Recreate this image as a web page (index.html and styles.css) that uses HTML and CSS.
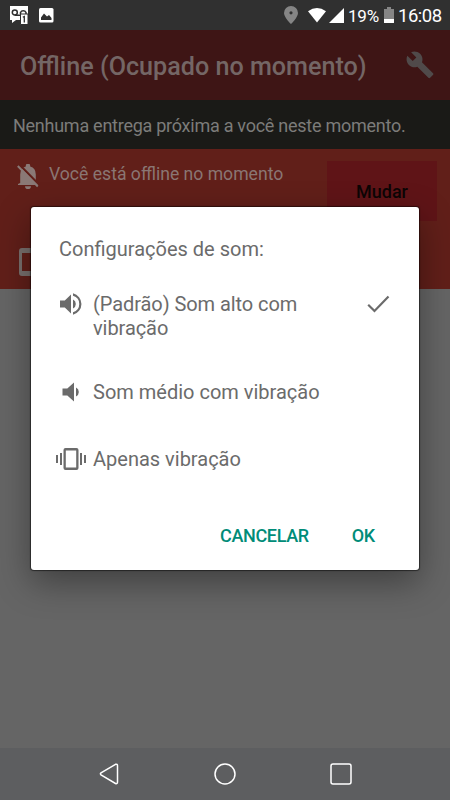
FILE: index.html
```html
<!DOCTYPE html>
<html lang="pt-BR">
<head>
<meta charset="utf-8">
<title>Configurações de som</title>
<link rel="stylesheet" href="styles.css">
</head>
<body>
<div class="phone">
  <header class="status">
    <svg class="status-contact" width="19" height="19" viewBox="0 0 19 19"><path fill="#fff" d="M0 0h18v18h-8v-4H6l-4 3v-3H0z"/><g fill="none" stroke="#303030" stroke-width="1.5"><circle cx="4.8" cy="6.5" r="2.5"/><path d="M4.8 9.3h7M10.5 8V6.5a3 3 0 0 1 5.500 0V8"/></g><path fill="#fff" stroke="#303030" d="M10.500 8h7.500v10.500h-7.500z"/><path stroke="#303030" stroke-width="1.3" fill="none" d="M12.800 11.300l1.500-.8v6"/></svg>
    <svg class="status-image" width="15" height="15" viewBox="0 0 15 15"><rect width="14.500" height="14.500" rx="1.500" fill="#fff"/><path fill="#303030" d="M2 12V9.500l3-4 3 3L10 7l2.500 3v2z"/></svg>
    <svg class="status-pin" width="14" height="18" viewBox="0 0 14 18"><path fill="#858585" fill-rule="evenodd" d="M7 0a7 7 0 0 0-7 7c0 4.500 7 11 7 11s7-6.500 7-11a7 7 0 0 0-7-7zm0 5.200a1.600 1.600 0 1 1 0 3.200 1.600 1.600 0 0 1 0-3.200z"/></svg>
    <svg class="status-wifi" width="18" height="15" viewBox="0 0 18 15"><path fill="#fff" d="M0 3.200Q9-3 18 3.200L9 14.500z"/></svg>
    <svg class="status-signal" width="15" height="15" viewBox="0 0 15 15"><path fill="#fff" d="M0 15L15 0v15z"/></svg>
    <span class="status-percent">19%</span>
    <svg class="status-battery" width="10" height="16" viewBox="0 0 10 16"><path fill="#858585" d="M3 0h4v2h3v10H0V2h3z"/><path fill="#fff" d="M0 12h10v3.500q0 .5-.5.500h-9Q0 16 0 15.500z"/></svg>
    <span class="status-time">16:08</span>
  </header>
  <div class="appbar">
    <h1 class="appbar-title">Offline (Ocupado no momento)</h1>
    <svg class="wrench" width="28" height="28" viewBox="0.500 0.800 23 22.800"><path fill="#504a4a" d="M22.700 19l-9.100-9.100c.9-2.300.4-5-1.500-6.900-2-2-5-2.400-7.400-1.300L9 6 6 9 1.600 4.700C.4 7.100.9 10.100 2.900 12.100c1.900 1.900 4.600 2.400 6.900 1.500l9.100 9.100c.4.4 1 .4 1.400 0l2.300-2.300c.5-.4.500-1.100.1-1.400z"/></svg>
  </div>
  <div class="notice"><span class="notice-text">Nenhuma entrega próxima a você neste momento.</span></div>
  <section class="offline">
    <div class="offline-row">
      <svg class="bell" width="22" height="25" viewBox="0 0 22 25"><path fill="#8a7976" d="M3.200 19V10.500Q3.200 4 8.800 2.600V1.800a2.200 2.200 0 0 1 4.400 0v.8q5.600 1.400 5.600 7.900V17l2.200 3v1H1v-1zM8 22.200h6a3 3 0 0 1-6 0z"/><path stroke="#611f19" stroke-width="2.200" d="M2.500.8L22 20.500"/><path stroke="#8a7976" stroke-width="2" d="M.8 2L20.800 22.500"/></svg>
      <span class="offline-text">Você está offline no momento</span>
      <span class="change">Mudar</span>
    </div>
    <svg class="device" width="30" height="28" viewBox="0 0 30 28"><path fill="#79706e" fill-rule="evenodd" d="M3 0h27v28H3q-3 0-3-3V3q0-3 3-3zm0 5v18h27V5z"/></svg>
  </section>
  <main class="blank"></main>
  <nav class="nav">
    <svg class="nav-back" width="20" height="22" viewBox="0 0 20 22"><path d="M16.500 1.300L2 9.800q-1.200 1 0 2L16.500 20.500q2 .6 2-1.500V2.800q0-2-2-1.500z"/></svg>
    <svg class="nav-home" width="22" height="22" viewBox="0 0 22 22"><circle cx="11" cy="11" r="10"/></svg>
    <svg class="nav-recent" width="22" height="22" viewBox="0 0 22 22"><rect x="1" y="1" width="20" height="20" rx="2"/></svg>
  </nav>
  <div class="dialog" role="dialog">
    <h2 class="dialog-title">Configurações de som:</h2>
    <div class="option option-loud">
      <svg class="option-icon" width="30" height="24" viewBox="0 0 30 24"><path fill="#6b6b6b" d="M4 8.500v7h4.800l6.200 6v-19l-6.200 6zM17 7.500v9a5 5 0 0 0 0-9zM17 1.300v2.500a8.500 8.500 0 0 1 0 16.400v2.500a11 11 0 0 0 0-21.400z"/></svg>
      <span class="option-label">(Padrão) Som alto com<br>vibração</span>
      <svg class="check" width="23" height="18" viewBox="0 0 23 18"><path fill="none" stroke="#6b6b6b" stroke-width="2.200" d="M1.200 9.700l6.300 6.300L21.500 1.500"/></svg>
    </div>
    <div class="option option-medium">
      <svg class="option-icon" width="30" height="24" viewBox="0 0 30 24"><path fill="#6b6b6b" d="M6.500 8.500v7h4.800l6.700 6v-19l-6.700 6zM20 7.500v9a5 5 0 0 0 0-9z"/></svg>
      <span class="option-label">Som médio com vibração</span>
    </div>
    <div class="option option-vibrate">
      <svg class="option-icon" width="30" height="24" viewBox="0 0 30 24"><path fill="#6b6b6b" fill-rule="evenodd" d="M0 8h2v8H0zM4 6h2v12H4zM24 6h2v12h-2zM28 8h2v8h-2zM9.500 1h11q2 0 2 2v18q0 2-2 2h-11q-2 0-2-2V3q0-2 2-2zm.3 2.500v17h10.400v-17z"/></svg>
      <span class="option-label">Apenas vibração</span>
    </div>
    <div class="actions"><span class="cancel">CANCELAR</span><span class="ok">OK</span></div>
  </div>
</div>
</body>
</html>
```
FILE: styles.css
```css
* { box-sizing: border-box; }
body { margin: 0; font-family: Roboto, sans-serif; }
svg { display: block; flex: none; }
h1, h2 { margin: 0; }
span { white-space: nowrap; }
.phone { position: relative; width: 450px; height: 800px; display: flex; flex-direction: column; overflow: hidden; background: #656565; }
.status { height: 30px; flex: none; display: flex; align-items: center; padding-left: 10px; background: #303030; color: #fff; }
.status-image { margin-left: 10px; }
.status-pin { margin-left: 230px; }
.status-wifi { margin-left: 10px; }
.status-signal { margin-left: 3px; }
.status-percent { width: 31px; margin-left: 4px; font-size: 17px; letter-spacing: -0.2px; padding-top: 1px; }
.status-battery { margin-left: 5px; }
.status-time { margin-left: 4px; font-size: 18.500px; letter-spacing: -0.5px; padding-top: 1px; }
.appbar { height: 70px; flex: none; display: flex; align-items: center; justify-content: space-between; padding: 3px 16px 0 20px; background: #3e1515; }
.appbar-title { font-size: 25.150px; line-height: 30px; font-weight: 500; color: #746665; white-space: nowrap; }
.wrench { margin-bottom: 3px; }
.notice { height: 49px; flex: none; display: flex; align-items: center; padding: 2px 0 0 13px; background: #1a1a17; color: #7c7c7a; font-size: 18px; letter-spacing: -0.26px; }
.offline { height: 140px; flex: none; padding: 13px 13px 0 17px; background: #611f19; }
.offline-row { display: flex; height: 86px; align-items: flex-start; }
.bell { margin-top: 2px; }
.offline-text { margin-left: 10px; font-size: 17.600px; line-height: 24px; color: #8a7673; }
.change { width: 110px; height: 60px; margin-left: auto; margin-top: -1px; background: #5f1417; color: #0c0505; font-size: 18px; font-weight: 500; line-height: 62px; text-align: center; }
.device { margin-left: 2px; }
.blank { flex: 1; background: #656565; }
.nav { height: 52px; flex: none; display: flex; align-items: center; padding-left: 99px; background: #5d5e60; }
.nav svg { fill: none; stroke: #fff; stroke-width: 1.5; }
.nav-home { margin-left: 95px; }
.nav-recent { margin-left: 94px; }
.dialog { position: absolute; left: 31px; top: 207px; width: 388px; height: 363px; padding: 28px 26px 0 25px; border-radius: 3px; background: #fff; box-shadow: 0 0 1px 1px rgba(0, 0, 0, 0.5), 0 12px 34px rgba(0, 0, 0, 0.38); color: #6b6b6b; }
.dialog-title { height: 55px; padding-left: 3px; font-size: 20px; line-height: 28px; font-weight: 400; }
.option { display: flex; align-items: flex-start; font-size: 20px; line-height: 24px; }
.option-loud { height: 88px; letter-spacing: -0.07px; }
.option-medium { height: 67px; }
.option-vibrate { height: 79px; }
.option-icon { margin-top: 2px; }
.option-label { margin-left: 7px; padding-top: 2px; }
.check { margin: 5px 3px 0 auto; }
.actions { display: flex; gap: 43px; padding-left: 164px; font-size: 18px; line-height: 24px; font-weight: 500; letter-spacing: -0.35px; color: #008c78; }
```
